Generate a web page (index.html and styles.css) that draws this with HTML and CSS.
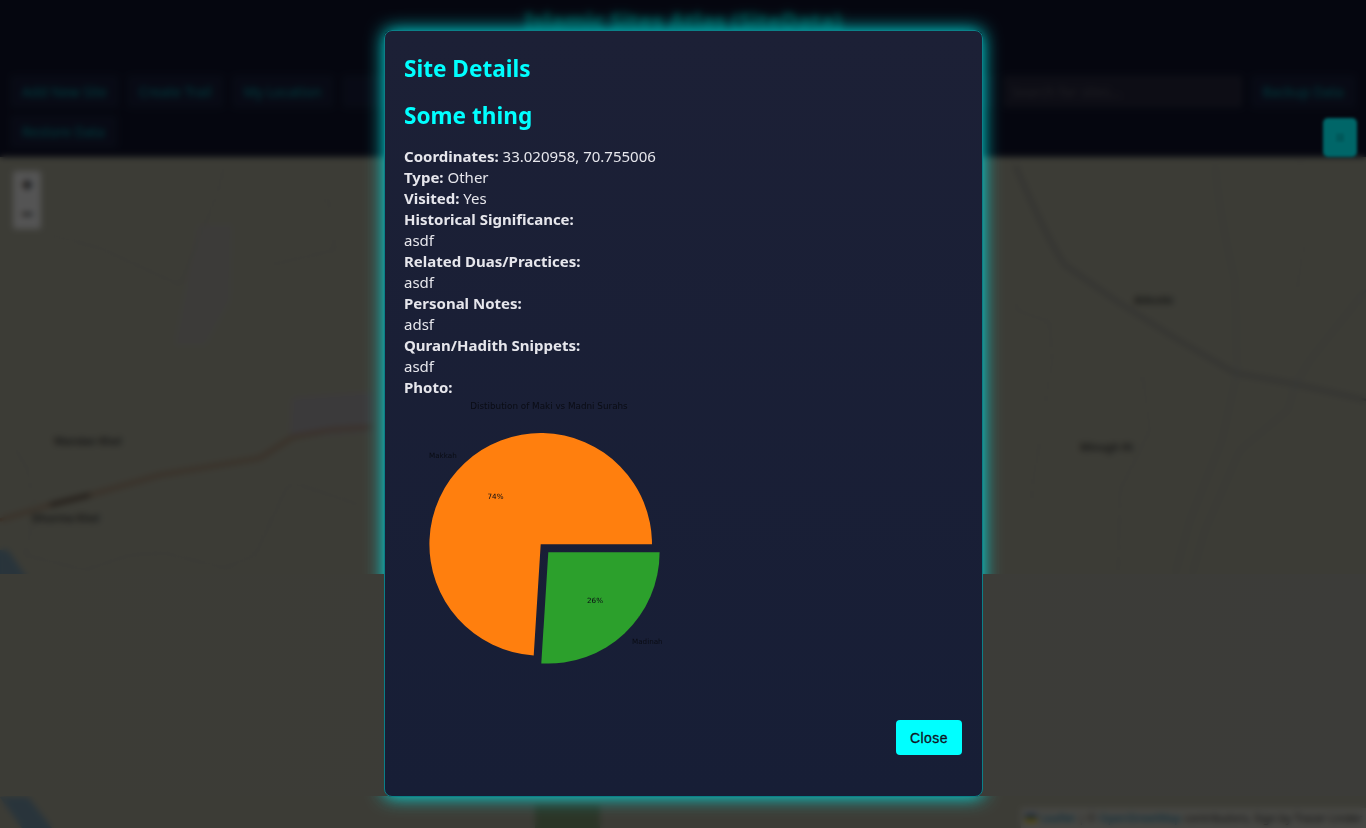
FILE: index.html
```html
<!DOCTYPE html>
<html lang="en">
<head>
<meta charset="utf-8">
<title>Islamic Sites Atlas</title>
<link rel="stylesheet" href="styles.css">
</head>
<body>
<div class="app">
  <header class="site-header"><h1 class="site-title">Islamic Sites Atlas (SiteData)</h1></header>
  <nav class="toolbar">
    <button class="tool">Add New Site</button>
    <button class="tool">Create Trail</button>
    <button class="tool">My Location</button>
    <button class="tool tool-wide">Import Sites</button>
    <input class="search" placeholder="Search for sites...">
    <button class="tool">Backup Data</button>
    <button class="tool">Restore Data</button>
  </nav>
  <main class="map">
    <svg class="map-art" viewBox="0 157 1366 671" preserveAspectRatio="none" aria-hidden="true">
      <path class="water" d="M0 550 L8 550 L35 590 L0 590Z"/>
      <path class="water" d="M0 797 L28 797 L52 828 L22 828Z"/>
      <path class="patch" d="M292 398 L372 392 L372 432 L290 438Z"/>
      <path class="patch patch-soft" d="M198 225 L232 225 L230 300 L205 345 L175 345Z"/>
      <path class="patch-green" d="M535 804 L600 804 L600 828 L535 828Z"/>
      <path class="road" d="M0 520 L50 505 L90 495 L160 475 L260 458 L293 437 L330 430 L372 427"/>
      <path class="bridge" d="M50 505 L90 495"/>
      <path class="grey-road" d="M1015 165 Q1050 245 1065 265 L1115 300 L1175 338 L1235 373 L1290 383 L1366 400"/>
      <path class="lane" d="M1215 165 Q1220 220 1235 280 L1237 373 L1222 440 L1190 520 L1175 574"/>
      <path class="lane" d="M1295 385 L1288 410 L1240 450 L1205 530 L1192 574"/>
      <path class="lane" d="M1366 290 L1310 360 L1295 385"/>
      <path class="track" d="M1300 160 L1305 240 L1295 300"/>
      <path class="track" d="M1012 270 L1016 310 L1050 322 L1052 360 L1040 440 L1032 490 L1036 574"/>
      <path class="track" d="M1140 360 L1150 430 L1120 490 L1118 574"/>
      <path class="track" d="M50 235 L100 248 L180 285 L182 280 L215 200 L225 165"/>
      <path class="track" d="M255 200 L330 200 L335 250 L270 265"/>
      <path class="track" d="M15 448 L28 470 L35 510 L25 555 L85 570 L130 555 L165 553 L225 568 L255 555 L288 485 L300 485 L360 505"/>
    </svg>
    <span class="place place-a">Wandan Khel</span>
    <span class="place place-b">Dhurma Khel</span>
    <span class="place place-c">Alikotki</span>
    <span class="place place-d">Minugh Kt</span>
    <div class="zoom-control"><span class="zoom-btn">+</span><span class="zoom-btn">−</span></div>
    <div class="attribution"><span class="flag"></span> <span class="attr-link">Leaflet</span> | © <span class="attr-link">OpenStreetMap</span> contributors, Sign by Tracer Linder</div>
  </main>
</div>

<div class="overlay">
  <div class="side-toggle">≡</div>
  <div class="band"></div>
  <div class="modal-shell">
    <div class="modal-glow"></div>
    <section class="modal">
      <h2 class="modal-heading">Site Details</h2>
      <h3 class="modal-heading site-name">Some thing</h3>
      <div class="details">
        <div><b>Coordinates:</b> 33.020958, 70.755006</div>
        <div><b>Type:</b> Other</div>
        <div><b>Visited:</b> Yes</div>
        <div><b>Historical Significance:</b></div>
        <div>asdf</div>
        <div><b>Related Duas/Practices:</b></div>
        <div>asdf</div>
        <div><b>Personal Notes:</b></div>
        <div>adsf</div>
        <div><b>Quran/Hadith Snippets:</b></div>
        <div>asdf</div>
        <div><b>Photo:</b></div>
      </div>
      <svg class="chart" viewBox="404 398 270 276" role="img" aria-label="Pie chart">
        <path class="slice-orange" d="M540.7 544.3 L652 544.3 A111.3 111.3 0 1 0 533.7 655.4Z"/>
        <path class="slice-green" d="M548.3 552.3 L659.6 552.3 A111.3 111.3 0 0 1 541.3 663.4Z"/>
        <text class="chart-title" x="549" y="409" text-anchor="middle">Distibution of Maki vs Madni Surahs</text>
        <text class="chart-label" x="429" y="458">Makkah</text>
        <text class="chart-label" x="487.500" y="499">74%</text>
        <text class="chart-label" x="587" y="603">26%</text>
        <text class="chart-label" x="632" y="644">Madinah</text>
      </svg>
      <div class="modal-actions"><button class="close-btn">Close</button></div>
    </section>
  </div>
</div>
</body>
</html>
```

FILE: styles.css
```css
* { box-sizing: border-box; }
html, body { margin: 0; height: 100%; overflow: hidden; }
body { font-family: "Noto Sans", "Open Sans", sans-serif; background: #121530; }

.app { height: 828px; display: flex; flex-direction: column; }

.site-header { height: 68px; flex: none; background: #121530; display: flex; justify-content: center; padding-top: 8px; }
.site-title { margin: 0; color: #00c0c0; font-size: 22.400px; line-height: 28px; font-weight: 700; text-shadow: 0 0 8px #00a0a0; }

.toolbar { height: 89px; flex: none; background: #121530; padding: 7px 0 0 10px; display: flex; flex-wrap: wrap; align-content: flex-start; gap: 7px 8px; }
.tool { height: 33px; padding: 0 11px; border: 1px solid #182a3c; border-radius: 4px; background: #1a2040; color: #00b0b8; font: 13.700px "Noto Sans", sans-serif; }
.tool-wide { width: 653px; color: #402030; }
.search { width: 240px; height: 33px; padding: 0 8px; border: 1px solid #182a3c; border-radius: 4px; background: #2a2a42; color: #777; font: 13.700px "Noto Sans", sans-serif; }
.search::placeholder { color: #5a5a66; }

.map { flex: 1; position: relative; background: #b6b6a4; overflow: hidden; }
.map-art { position: absolute; inset: 0; width: 100%; height: 100%; fill: none; }
.water { fill: #7c9fb4; stroke: none; }
.patch { fill: #b4b0b4; }
.patch-soft { fill: #b6b4ae; }
.patch-green { fill: #84a078; }
.road { stroke: #ae8c70; stroke-width: 3.500; }
.bridge { stroke: #665244; stroke-width: 4; }
.grey-road { stroke: #8c8c8c; stroke-width: 2.500; }
.lane { stroke: #a4a8aa; stroke-width: 1.800; }
.track { stroke: #a6a69a; stroke-width: 1.200; stroke-dasharray: 5 2; }

.place { position: absolute; font-size: 10.500px; color: #404040; font-weight: 600; white-space: nowrap; }
.place-a { left: 54px; top: 277px; }
.place-b { left: 32px; top: 354px; }
.place-c { left: 1134px; top: 136px; }
.place-d { left: 1080px; top: 283px; }

.zoom-control { position: absolute; left: 13px; top: 14px; width: 28px; display: flex; flex-direction: column; background: #fff; border-radius: 3px; }
.zoom-btn { height: 29px; text-align: center; font: 700 20px/29px "Liberation Sans", sans-serif; color: #111; }

.attribution { position: absolute; right: 0; bottom: 0; height: 20px; padding: 0 4px; background: rgba(255,255,255,.45); font-size: 11px; line-height: 20px; color: #333; white-space: nowrap; }
.attr-link { color: #0078a8; }
.flag { display: inline-block; width: 12px; height: 8px; background: linear-gradient(#3a6fc4 50%, #f5d000 50%); }

.overlay { position: fixed; inset: 0; background: rgba(0,0,0,.67); backdrop-filter: blur(3px); display: flex; justify-content: center; align-items: flex-start; padding-top: 30px; }

.side-toggle { position: absolute; right: 9px; top: 118px; width: 34px; height: 39px; border-radius: 5px; background: #006668; color: #004446; text-align: center; line-height: 39px; font-size: 16px; filter: blur(1.500px); }

.band { position: absolute; left: 0; right: 0; top: 574px; height: 222px; z-index: 2; background: linear-gradient(to right, #3c3c36, #3c3c39); }

.modal-shell { position: relative; width: 599px; height: 767px; margin-left: 1px; }
.modal-glow { position: absolute; inset: 0; z-index: 1; border-radius: 8px; box-shadow: 0 0 18px #00e8e8; }

.modal { position: relative; z-index: 3; height: 100%; padding: 21px 20px 20px 19px; display: flex; flex-direction: column; background: linear-gradient(#1c2036, #171e36); border: 1px solid #0b8088; border-radius: 8px; }
.modal-heading { margin: 0; color: #00ffff; font-size: 22.600px; line-height: 33px; font-weight: 700; }
.site-name { margin-top: 14px; }

.details { margin-top: 14px; color: #e6e6ec; font-size: 15px; line-height: 21px; }
.details b { font-weight: 700; }

.chart { display: block; width: 270px; height: 276px; flex: none; }
.slice-orange { fill: #ff7f0e; }
.slice-green { fill: #2ca02c; }
.chart-title, .chart-label { font-family: "DejaVu Sans", sans-serif; fill: #0a0c14; }
.chart-title { font-size: 8.800px; }
.chart-label { font-size: 7.200px; }

.modal-actions { margin-top: auto; padding-bottom: 21px; display: flex; justify-content: flex-end; }
.close-btn { width: 66px; height: 35px; padding: 0; border: 0; border-radius: 4px; background: #00ffff; color: #10131f; font: 14px "Liberation Sans", sans-serif; letter-spacing: .4px; -webkit-text-stroke: .3px #10131f; }
```
